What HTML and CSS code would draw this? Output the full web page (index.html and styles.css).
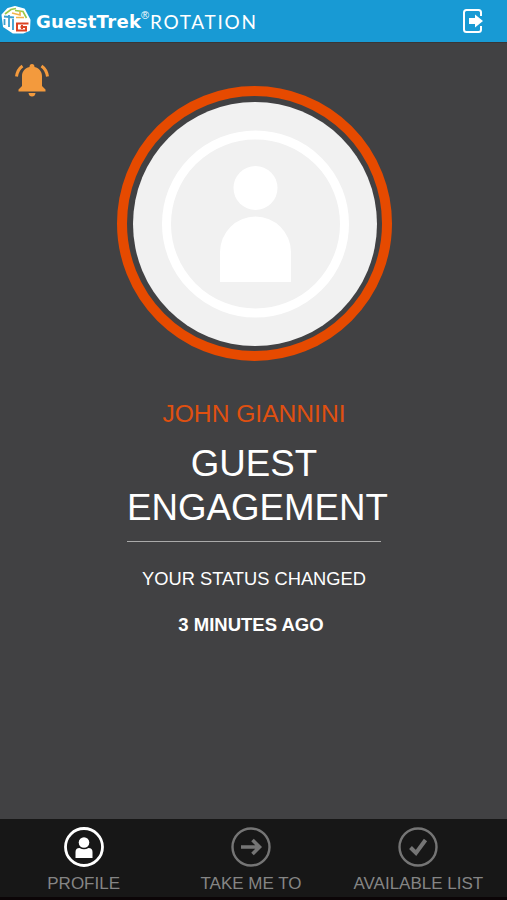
FILE: index.html
```
<!DOCTYPE html>
<html lang="en">
<head>
  <meta charset="UTF-8">
  <title>GuestTrek Rotation</title>
  <link rel="stylesheet" href="styles.css">
</head>
<body>
  <header class="topbar">
    <svg class="logo" viewBox="0 0 30 30">
      <path d="M14 2 L23 4.5 L28.500 15 L28 25 L22 27.500 L12 27.500 L3 21.500 L1.500 10 L7 4 Z" fill="#fff" stroke="#fff" stroke-width="2" stroke-linejoin="round"/>
      <path d="M4 9 L10 4.500 L15 3.500" fill="none" stroke="#9bc94b" stroke-width="1.600"/>
      <path d="M14 5.500 L22 6.500 L25.500 13" fill="none" stroke="#9bc94b" stroke-width="1.600"/>
      <path d="M11 8 L19 10 V6.500 M15 12.500 H23" fill="none" stroke="#f3b34c" stroke-width="1.700"/>
      <path d="M3 11.500 L13 12.500 M8 10 V22 M3.500 14 V20 M12 14 V25" fill="none" stroke="#3a9fd0" stroke-width="1.800"/>
      <path d="M27.500 18.500 H16 V25.500 H25 V22 H19.500 M21 20 V24" fill="none" stroke="#dc4424" stroke-width="2"/>
    </svg>
    <span class="brand">GuestTrek</span>
    <span class="reg">®</span>
    <span class="product">ROTATION</span>
    <svg class="logout" viewBox="0 0 22 26">
      <path d="M19 8 V4.500 Q19 2 16.500 2 H4.500 Q2 2 2 4.500 V21.500 Q2 24 4.500 24 H16.500 Q19 24 19 21.500 V18" fill="none" stroke="#fff" stroke-width="2"/>
      <path d="M7 10 H13 V6.500 L21 13 L13 19.500 V16 H7 Z" fill="#fff"/>
    </svg>
  </header>

  <main class="profile">
    <svg class="bell" viewBox="0 0 36 34">
      <path d="M18 1 C19.600 1 20.500 2 20.500 4 C25.500 5.200 28 9 28 13 V23 L31.500 26.500 V28.500 H4.500 V26.500 L8 23 V13 C8 9 10.500 5.200 15.500 4 C15.500 2 16.400 1 18 1 Z"/>
      <path d="M14.500 30 H21.500 Q21 33.500 18 33.500 Q15 33.500 14.500 30 Z"/>
      <path d="M8.500 3 Q3.500 6.500 2.500 13.500 M27.500 3 Q32.500 6.500 33.500 13.500" fill="none" stroke="#f39a3d" stroke-width="3"/>
    </svg>

    <div class="avatar">
      <svg class="avatar-img" viewBox="0 0 244 244">
        <circle cx="122" cy="122" r="122" fill="#f1f1f1"/>
        <circle cx="122.500" cy="122" r="89" fill="none" stroke="#fff" stroke-width="9"/>
        <circle cx="122.500" cy="86" r="22" fill="#fff"/>
        <path d="M87 180 V150 A35.500 35.500 0 0 1 158 150 V180 Z" fill="#fff"/>
      </svg>
    </div>

    <div class="name">JOHN GIANNINI</div>
    <h1 class="status">GUEST<br>ENGAGEMENT</h1>
    <hr class="divider">
    <p class="changed">YOUR STATUS CHANGED</p>
    <p class="ago">3 MINUTES AGO</p>
  </main>

  <nav class="tabs">
    <a class="tab active">
      <svg class="tab-icon" viewBox="0 0 40 40">
        <circle cx="20" cy="20" r="18.500" fill="none" stroke="currentColor" stroke-width="2.800"/>
        <circle cx="20" cy="15.500" r="5.300" fill="currentColor"/>
        <path d="M11.500 31 V25 Q11.500 21 15.500 21 Q20 23.500 24.500 21 Q28.500 21 28.500 25 V31 Z" fill="currentColor"/>
      </svg>
      <span class="tab-label">PROFILE</span>
    </a>
    <a class="tab">
      <svg class="tab-icon" viewBox="0 0 40 40">
        <circle cx="20" cy="20" r="18.500" fill="none" stroke="currentColor" stroke-width="2.400"/>
        <path d="M10 20 H28 M21.500 13 L28.500 20 L21.500 27" fill="none" stroke="currentColor" stroke-width="3.600"/>
      </svg>
      <span class="tab-label">TAKE ME TO</span>
    </a>
    <a class="tab">
      <svg class="tab-icon" viewBox="0 0 40 40">
        <circle cx="20" cy="20" r="18.500" fill="none" stroke="currentColor" stroke-width="2.400"/>
        <path d="M12.500 20.500 L18 26 L27.500 13" fill="none" stroke="currentColor" stroke-width="4"/>
      </svg>
      <span class="tab-label">AVAILABLE LIST</span>
    </a>
  </nav>
</body>
</html>
```
FILE: styles.css
```
* {
  box-sizing: border-box;
}

body {
  margin: 0;
  height: 900px;
  display: flex;
  flex-direction: column;
  overflow: hidden;
  background-color: #414143;
  color: #fff;
  font-family: "Liberation Sans", Arial, sans-serif;
}

.topbar {
  display: flex;
  align-items: center;
  height: 42px;
  padding: 0 23px 0 1px;
  background-color: #189ad4;
  white-space: nowrap;
}

.logo {
  width: 30px;
  height: 30px;
  margin-top: -2px;
}

.brand {
  width: 105px;
  margin-left: 5px;
  font-family: "DejaVu Sans", sans-serif;
  font-size: 18px;
  font-weight: bold;
  letter-spacing: 0.3px;
}

.reg {
  width: 9px;
  margin-top: -12px;
  font-size: 11px;
}

.product {
  font-family: Lato, sans-serif;
  font-size: 19px;
  letter-spacing: 1.7px;
}

.logout {
  width: 22px;
  height: 26px;
  margin-left: auto;
}

.profile {
  flex: 1;
  display: flex;
  flex-direction: column;
  align-items: center;
  position: relative;
  padding: 43px 0 0 1px;
  border-top: 1px solid #393636;
}

.bell {
  position: absolute;
  left: 14px;
  top: 20px;
  width: 36px;
  height: 34px;
  fill: #f39a3d;
}

.avatar {
  width: 275px;
  height: 275px;
  padding: 6px;
  border: 10px solid #e64a00;
  border-radius: 50%;
}

.avatar-img {
  display: block;
  width: 244px;
  height: 244px;
}

.name {
  margin-top: 38px;
  font-size: 24.6px;
  line-height: 30px;
  color: #e05010;
}

/* the long line runs past the right edge of the divider */
.status {
  width: 254px;
  margin: 13px 0 0;
  font-size: 36.7px;
  font-weight: normal;
  line-height: 44px;
  text-align: center;
}

.divider {
  width: 254px;
  height: 1px;
  margin: 11px 0 0;
  border: 0;
  background-color: #aaa;
}

.changed {
  margin: 26px 0 0;
  font-size: 18.3px;
  line-height: 22px;
}

.ago {
  margin: 24px 6px 0 0;
  font-size: 18.5px;
  font-weight: bold;
  line-height: 22px;
}

.tabs {
  display: flex;
  height: 81px;
  padding-right: 5px;
  background-color: #171717;
  border-bottom: 3px solid #0b0507;
}

.tab {
  flex: 1;
  display: flex;
  flex-direction: column;
  align-items: center;
  padding-top: 8px;
  color: #757575;
}

.tab.active {
  color: #fff;
}

.tab-icon {
  width: 40px;
  height: 40px;
}

.tab-label {
  margin-top: 7px;
  font-size: 17px;
  line-height: 20px;
  color: #858585;
  white-space: nowrap;
}
```
